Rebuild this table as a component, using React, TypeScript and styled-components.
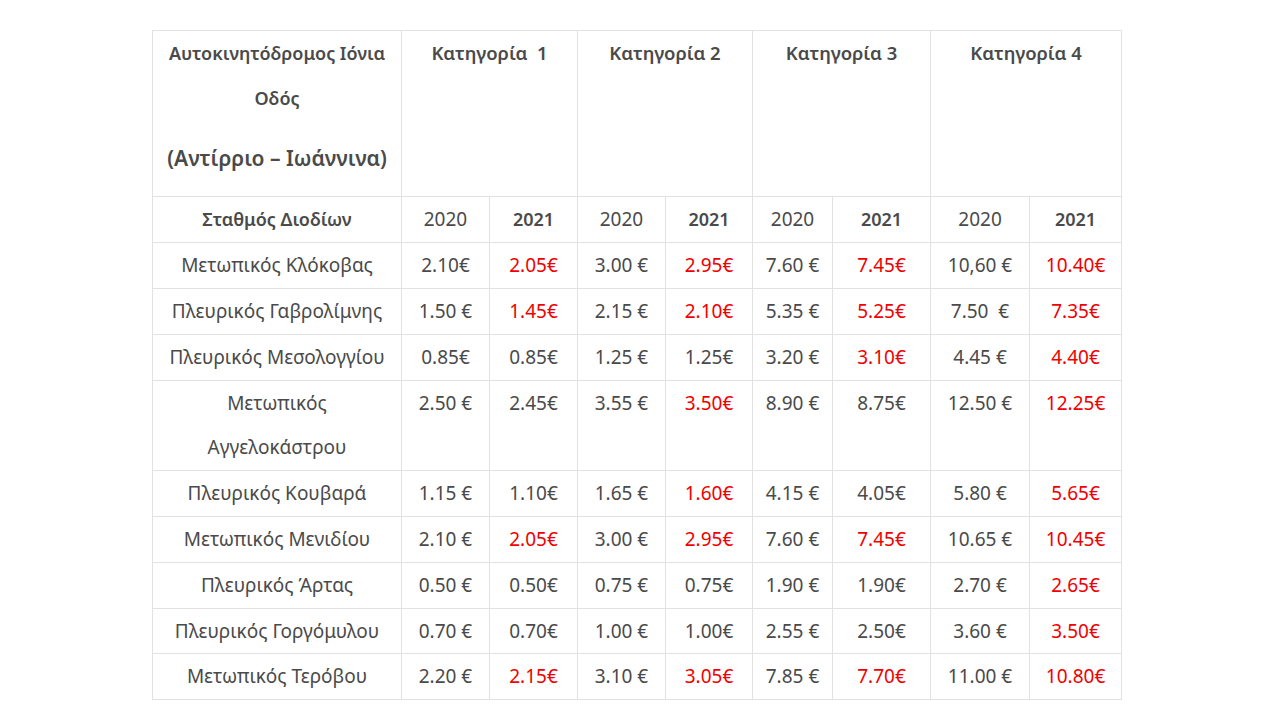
import React from "react";
import styled, { createGlobalStyle } from "styled-components";

const GlobalStyle = createGlobalStyle`
  html, body { margin: 0; padding: 0; background: #ffffff; }
  body { font-family: "Noto Sans", "DejaVu Sans", sans-serif; color: #4a4a4a; }
`;

const Page = styled.main`
  padding: 30px 0 20px 152px;
`;

const Table = styled.table`
  border-collapse: collapse;
  table-layout: fixed;
  width: 969px;
  font-size: 19px;
  line-height: 44.8px;
  color: #4a4a4a;
`;

const Cell = styled.td<{ $bold?: boolean; $red?: boolean }>`
  border: 1px solid #e2e2e2;
  padding: 0;
  text-align: center;
  vertical-align: top;
  white-space: pre;
  font-weight: ${(p) => (p.$bold ? 600 : 400)};
  font-size: ${(p) => (p.$bold ? "18px" : "19px")};
  color: ${(p) => (p.$red ? "#f20000" : "#4a4a4a")};
`;

const StationCell = styled(Cell)`
  white-space: normal;
`;

const CategoryCell = styled(Cell)`
  font-size: 18.5px;
`;

const Subtitle = styled.div`
  margin: 15px 0 16px;
  font-size: 21px;
`;

const cols = [249, 88, 88, 88, 87, 80, 98, 99, 92];

type Price = [string, boolean];
type Row = { name: React.ReactNode; prices: Price[] };

const rows: Row[] = [
  { name: "Μετωπικός Κλόκοβας", prices: [["2.10€", false], ["2.05€", true], ["3.00 €", false], ["2.95€", true], ["7.60 €", false], ["7.45€", true], ["10,60 €", false], ["10.40€", true]] },
  { name: "Πλευρικός Γαβρολίμνης", prices: [["1.50 €", false], ["1.45€", true], ["2.15 €", false], ["2.10€", true], ["5.35 €", false], ["5.25€", true], ["7.50  €", false], ["7.35€", true]] },
  { name: "Πλευρικός Μεσολογγίου", prices: [["0.85€", false], ["0.85€", false], ["1.25 €", false], ["1.25€", false], ["3.20 €", false], ["3.10€", true], ["4.45 €", false], ["4.40€", true]] },
  { name: <>Μετωπικός<br />Αγγελοκάστρου</>, prices: [["2.50 €", false], ["2.45€", false], ["3.55 €", false], ["3.50€", true], ["8.90 €", false], ["8.75€", false], ["12.50 €", false], ["12.25€", true]] },
  { name: "Πλευρικός Κουβαρά", prices: [["1.15 €", false], ["1.10€", false], ["1.65 €", false], ["1.60€", true], ["4.15 €", false], ["4.05€", false], ["5.80 €", false], ["5.65€", true]] },
  { name: "Μετωπικός Μενιδίου", prices: [["2.10 €", false], ["2.05€", true], ["3.00 €", false], ["2.95€", true], ["7.60 €", false], ["7.45€", true], ["10.65 €", false], ["10.45€", true]] },
  { name: "Πλευρικός Άρτας", prices: [["0.50 €", false], ["0.50€", false], ["0.75 €", false], ["0.75€", false], ["1.90 €", false], ["1.90€", false], ["2.70 €", false], ["2.65€", true]] },
  { name: "Πλευρικός Γοργόμυλου", prices: [["0.70 €", false], ["0.70€", false], ["1.00 €", false], ["1.00€", false], ["2.55 €", false], ["2.50€", false], ["3.60 €", false], ["3.50€", true]] },
  { name: "Μετωπικός Τερόβου", prices: [["2.20 €", false], ["2.15€", true], ["3.10 €", false], ["3.05€", true], ["7.85 €", false], ["7.70€", true], ["11.00 €", false], ["10.80€", true]] },
];

const categories = ["Κατηγορία  1", "Κατηγορία 2", "Κατηγορία 3", "Κατηγορία 4"];

export default function App() {
  return (
    <>
      <GlobalStyle />
      <Page>
        <Table>
          <colgroup>
            {cols.map((w, i) => (
              <col key={i} style={{ width: w }} />
            ))}
          </colgroup>
          <tbody>
            <tr>
              <StationCell $bold>
                Αυτοκινητόδρομος Ιόνια
                <br />
                Οδός
                <Subtitle>(Αντίρριο – Ιωάννινα)</Subtitle>
              </StationCell>
              {categories.map((c) => (
                <CategoryCell key={c} colSpan={2} $bold>
                  {c}
                </CategoryCell>
              ))}
            </tr>
            <tr>
              <Cell $bold>Σταθμός Διοδίων</Cell>
              {categories.map((c) => (
                <React.Fragment key={c}>
                  <Cell>2020</Cell>
                  <Cell $bold>2021</Cell>
                </React.Fragment>
              ))}
            </tr>
            {rows.map((r, i) => (
              <tr key={i}>
                <StationCell>{r.name}</StationCell>
                {r.prices.map(([v, red], j) => (
                  <Cell key={j} $red={red}>
                    {v}
                  </Cell>
                ))}
              </tr>
            ))}
          </tbody>
        </Table>
      </Page>
    </>
  );
}
